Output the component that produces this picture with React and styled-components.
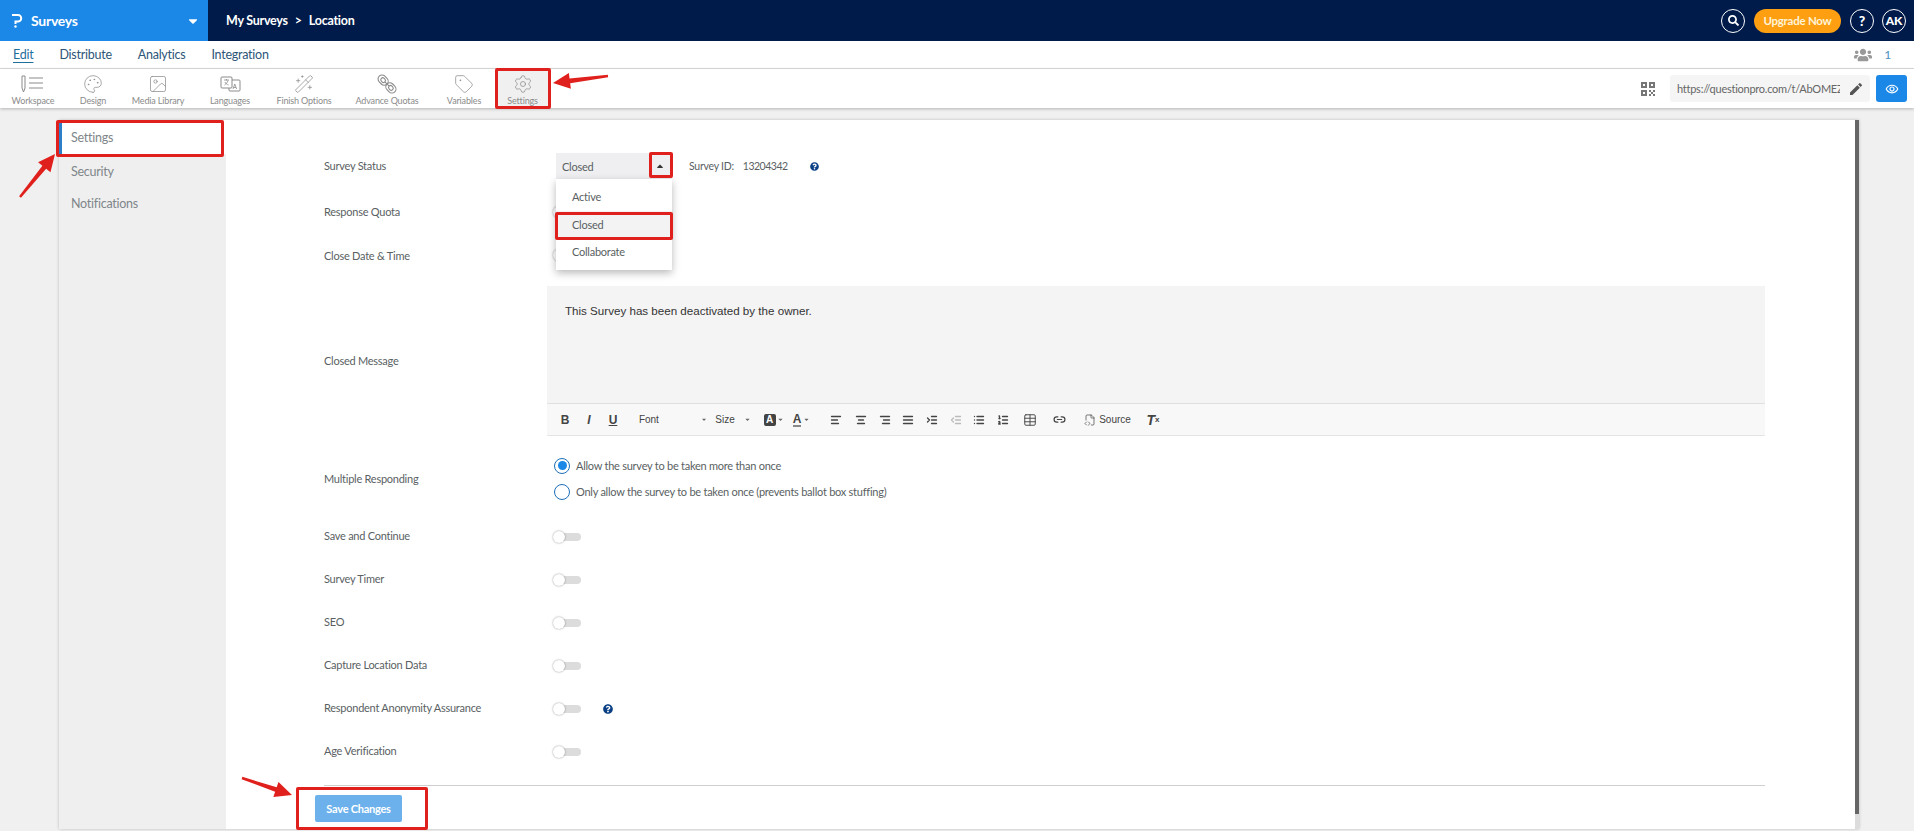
import React from 'react';
import styled, { createGlobalStyle } from 'styled-components';
import { FaSearch, FaUsers, FaQuestionCircle, FaCaretDown, FaCaretUp } from 'react-icons/fa';
import { MdEdit, MdOutlineRemoveRedEye } from 'react-icons/md';
import {
    Palette, Image, WandSparkles, Tag, Settings as Gear,
    AlignLeft, AlignCenter, AlignRight, AlignJustify, IndentIncrease, IndentDecrease,
    List, ListOrdered, Table, Link2, FileCode2,
} from 'lucide-react';

const Colors = {
    Navy: '#001a49',
    Blue: '#1b87e6',
    Page: '#f0f0f0',
    Side: '#efefef',
    Label: '#5a5f63',
    Icon: '#8b8b8b',
    Red: '#e0201c',
};

const SANS = '"Lato", "Liberation Sans", sans-serif';

const GlobalStyle = createGlobalStyle`
    html, body {
        margin: 0;
        padding: 0;
        height: 100%;
        overflow: hidden;
        background-color: ${Colors.Page};
        font-family: ${SANS};
        letter-spacing: -0.25px;
    }
`;

const Page = styled.div`
    position: relative;
    width: 1914px;
    height: 831px;
    overflow: hidden;
    display: flex;
    flex-direction: column;
`;

const TopBar = styled.header`
    height: 41px;
    display: flex;
    align-items: center;
    background-color: ${Colors.Navy};
    color: #fff;
`;

const Brand = styled.div`
    width: 208px;
    height: 100%;
    box-sizing: border-box;
    padding: 0 8px 0 12px;
    display: flex;
    align-items: center;
    background-color: ${Colors.Blue};
    font-size: 14px;
    font-weight: 700;
`;

const BrandName = styled.span`
    margin-left: 8px;
    flex: 1;
`;

const Crumbs = styled.div`
    margin-left: 18px;
    flex: 1;
    display: flex;
    align-items: center;
    gap: 7px;
    font-size: 12.5px;
    font-weight: 700;
`;

const TopActions = styled.div`
    display: flex;
    align-items: center;
    margin-right: 8px;
`;

const RoundButton = styled.div`
    width: 24px;
    height: 24px;
    box-sizing: border-box;
    margin-left: ${(p) => p.$ml || 9}px;
    border: 1.5px solid #fff;
    border-radius: 50%;
    display: flex;
    align-items: center;
    justify-content: center;
    font-size: ${(p) => p.$size || 13}px;
    font-weight: 900;
`;

const UpgradeButton = styled.div`
    width: 87px;
    height: 24px;
    margin-left: 9px;
    border-radius: 12px;
    background-color: #fd9f10;
    display: flex;
    align-items: center;
    justify-content: center;
    font-size: 11.5px;
    font-weight: 700;
    color: #fff3d8;
`;

const TabBar = styled.nav`
    height: 27px;
    padding: 0 23px 0 13px;
    display: flex;
    align-items: center;
    background-color: #fff;
    border-bottom: 1px solid #dcdcdc;
`;

const Tab = styled.span`
    margin-right: ${(p) => p.$mr}px;
    font-size: 12.5px;
    color: ${(p) => (p.$active ? '#1f6f9e' : '#2d5578')};
    text-decoration: ${(p) => (p.$active ? 'underline' : 'none')};
    text-underline-offset: 3px;
`;

const Online = styled.div`
    margin-left: auto;
    display: flex;
    align-items: center;
    gap: 12px;
    font-size: 12px;
    color: #4a90c2;
`;

const ToolBar = styled.div`
    height: 39px;
    padding-left: 3px;
    display: flex;
    align-items: stretch;
    background-color: #fff;
    box-shadow: 0 1px 3px rgba(0, 0, 0, 0.25);
    position: relative;
`;

const ToolItem = styled.div`
    width: ${(p) => p.$w}px;
    display: flex;
    flex-direction: column;
    align-items: center;
    padding-top: 4px;
    box-sizing: border-box;
    background-color: ${(p) => (p.$active ? '#f0f0f0' : 'transparent')};
    color: ${Colors.Icon};
    font-size: 9px;
`;

const ToolIcon = styled.div`
    height: 21px;
    display: flex;
    align-items: center;
    justify-content: center;
`;

const ToolLabel = styled.span`
    margin-top: 1px;
    white-space: nowrap;
    letter-spacing: -0.15px;
`;

const LinkArea = styled.div`
    margin-left: auto;
    margin-right: 7px;
    display: flex;
    align-items: center;
    gap: 6px;
`;

const LinkBox = styled.div`
    width: 200px;
    height: 27px;
    margin-left: 9px;
    box-sizing: border-box;
    padding: 0 6px 0 7px;
    display: flex;
    align-items: center;
    justify-content: space-between;
    background-color: #f5f5f5;
    border-radius: 3px;
    font-size: 11px;
    color: #666;
`;

const LinkText = styled.span`
    width: 163px;
    overflow: hidden;
    white-space: nowrap;
`;

const PreviewButton = styled.div`
    width: 31px;
    height: 27px;
    border-radius: 3px;
    background-color: ${Colors.Blue};
    display: flex;
    align-items: center;
    justify-content: center;
    color: #fff;
`;

const Body = styled.div`
    flex: 1;
    display: flex;
    margin: 12px 55px 2px 59px;
    min-height: 0;
    box-shadow: 0 0 3px rgba(0, 0, 0, 0.22);
`;

const SideMenu = styled.aside`
    width: 167px;
    background-color: ${Colors.Side};
`;

const SideItem = styled.div`
    height: ${(p) => p.$h}px;
    box-sizing: border-box;
    padding-left: 9px;
    display: flex;
    align-items: center;
    font-size: 12.5px;
    color: #80868a;
    background-color: ${(p) => (p.$active ? '#fff' : 'transparent')};
    border-left: 3px solid ${(p) => (p.$active ? '#2d7fc9' : 'transparent')};
`;

const Panel = styled.main`
    flex: 1;
    box-sizing: border-box;
    padding: 24px 90px 0 98px;
    background-color: #fff;
`;

const ScrollTrack = styled.div`
    width: 4px;
    background-color: #dcdcdc;
`;

const ScrollThumb = styled.div`
    height: 694px;
    background-color: #666;
`;

const Row = styled.div`
    height: ${(p) => p.$h}px;
    margin-top: ${(p) => p.$mt || 0}px;
    display: flex;
    align-items: center;
`;

const Label = styled.div`
    width: 223px;
    flex-shrink: 0;
    margin-top: ${(p) => p.$mt || 0}px;
    font-size: 11px;
    color: ${Colors.Label};
`;

const StatusSelect = styled.div`
    position: relative;
    width: 116px;
    height: 26px;
    margin-left: 9px;
    box-sizing: border-box;
    padding: 0 6px;
    display: flex;
    align-items: center;
    justify-content: space-between;
    background-color: #efeff1;
    font-size: 11px;
    color: ${Colors.Label};
`;

const CaretCell = styled.span`
    width: 12px;
    display: flex;
    justify-content: center;
    color: #333;
`;

const DropMenu = styled.ul`
    position: absolute;
    z-index: 2;
    top: 26px;
    left: 0;
    width: 116px;
    height: 91px;
    margin: 0;
    padding: 4px 0 0;
    box-sizing: border-box;
    list-style: none;
    background-color: #fff;
    box-shadow: 0 3px 8px rgba(0, 0, 0, 0.28);
`;

const DropItem = styled.li`
    height: 27.5px;
    padding-left: 16px;
    display: flex;
    align-items: center;
    background-color: ${(p) => (p.$active ? '#f3f3f3' : 'transparent')};
`;

const SurveyId = styled.div`
    margin-left: 17px;
    display: flex;
    align-items: center;
    gap: 9px;
    font-size: 10.5px;
    color: ${Colors.Label};
`;

const SurveyNumber = styled.span`
    letter-spacing: -0.5px;
`;

const HelpDot = styled.span`
    display: flex;
    margin-left: ${(p) => p.$ml}px;
    color: #0a3f85;
`;

const Editor = styled.div`
    margin-top: 12px;
    height: 150px;
    flex: 1;
    display: flex;
    flex-direction: column;
    background-color: #f4f4f4;
`;

const EditorText = styled.div`
    flex: 1;
    padding: 18px 18px 0;
    font-family: "Liberation Sans", Arial, sans-serif;
    font-size: 11.6px;
    letter-spacing: 0;
    color: #333;
`;

const EditorTools = styled.div`
    height: 33px;
    padding-left: 6px;
    display: flex;
    align-items: center;
    background-color: #f8f8f8;
    border-top: 1px solid #e0e0e0;
    border-bottom: 1px solid #e4e4e4;
    box-sizing: border-box;
    color: #444;
`;

const EditorTool = styled.span`
    width: ${(p) => p.$w}px;
    flex-shrink: 0;
    display: flex;
    align-items: center;
    justify-content: ${(p) => (p.$start ? 'flex-start' : 'center')};
    gap: ${(p) => p.$gap || 0}px;
    font-family: "Liberation Sans", Arial, sans-serif;
    font-size: ${(p) => p.$size || 10}px;
    font-weight: ${(p) => (p.$bold ? 700 : 400)};
    font-style: ${(p) => (p.$italic ? 'italic' : 'normal')};
    text-decoration: ${(p) => (p.$under ? 'underline' : 'none')};
    letter-spacing: 0;
    color: ${(p) => (p.$faded ? '#bbb' : '#444')};
`;

const ToolCaret = styled(FaCaretDown)`
    width: 7px;
    height: 7px;
    color: #666;
`;

const HighlightA = styled.span`
    width: 12px;
    height: 12px;
    border-radius: 2px;
    background-color: #444;
    color: #fff;
    font-weight: 700;
    font-size: 10px;
    display: flex;
    align-items: center;
    justify-content: center;
`;

const UnderlineA = styled.span`
    font-weight: 700;
    font-size: 12px;
    line-height: 12px;
    border-bottom: 2px solid #888;
`;

const Subscript = styled.sub`
    font-size: 8px;
    font-style: normal;
`;

const RadioGroup = styled.div`
    margin-left: 7px;
    margin-top: -1px;
    display: flex;
    flex-direction: column;
`;

const RadioLine = styled.label`
    height: 26px;
    display: flex;
    align-items: center;
    gap: 6px;
    font-size: 11px;
    color: ${Colors.Label};
`;

const RadioMark = styled.span`
    width: 14px;
    height: 14px;
    border: 1.5px solid #1d6fb8;
    border-radius: 50%;
    display: flex;
    align-items: center;
    justify-content: center;
    &::after {
        content: '';
        width: 9px;
        height: 9px;
        border-radius: 50%;
        background-color: ${(p) => (p.$on ? Colors.Blue : 'transparent')};
    }
`;

const Toggle = styled.span`
    position: relative;
    width: 28px;
    height: 14px;
    margin-left: 6px;
    display: flex;
    align-items: center;
    flex-shrink: 0;
    &::before {
        content: '';
        width: 21px;
        height: 8px;
        margin-left: 7px;
        border-radius: 4px;
        background-color: #dcdcdc;
    }
    &::after {
        content: '';
        position: absolute;
        left: 0;
        top: 1px;
        width: 12px;
        height: 12px;
        border-radius: 50%;
        background-color: #fff;
        box-shadow: 0 0 2px rgba(0, 0, 0, 0.45);
    }
`;

const Footer = styled.div`
    margin-top: 12px;
    padding-top: 9px;
    border-top: 1px solid #cfcfcf;
`;

const SaveButton = styled.button`
    width: 87px;
    height: 27px;
    margin-left: -9px;
    border: 0;
    border-radius: 2px;
    background-color: #6cb1ec;
    color: #fff;
    font-family: ${SANS};
    font-size: 11px;
    font-weight: 700;
    letter-spacing: -0.25px;
    display: block;
`;

// red markup drawn over the screenshot
const RedBox = styled.div`
    position: absolute;
    z-index: 5;
    left: ${(p) => p.$x}px;
    top: ${(p) => p.$y}px;
    width: ${(p) => p.$w}px;
    height: ${(p) => p.$h}px;
    box-sizing: border-box;
    border: 3px solid ${Colors.Red};
    border-radius: 2px;
`;

const ArrowLayer = styled.svg`
    position: absolute;
    z-index: 6;
    left: 0;
    top: 0;
    pointer-events: none;
`;

function arrowPoints([x1, y1], [x2, y2]) {
    const len = Math.hypot(x2 - x1, y2 - y1);
    const ux = (x2 - x1) / len;
    const uy = (y2 - y1) / len;
    const nx = -uy;
    const ny = ux;
    const bx = x2 - ux * 17;
    const by = y2 - uy * 17;
    const pts = [
        [x1 + nx * 1.2, y1 + ny * 1.2],
        [bx + nx * 2.4, by + ny * 2.4],
        [bx + nx * 8, by + ny * 8],
        [x2, y2],
        [bx - nx * 8, by - ny * 8],
        [bx - nx * 2.4, by - ny * 2.4],
        [x1 - nx * 1.2, y1 - ny * 1.2],
    ];
    return pts.map((p) => p.join(',')).join(' ');
}

function WorkspaceIcon() {
    return (
        <svg width="24" height="20" viewBox="0 0 24 20" fill="none" stroke={Colors.Icon} strokeWidth="1">
            <path d="M1 2h3v12l-1.500 4L1 14z" />
            <path d="M8 4h14M8 9h14M8 14h14" />
        </svg>
    );
}

function LanguagesIcon() {
    return (
        <svg width="21" height="18" viewBox="0 0 21 18" fill="none" stroke={Colors.Icon} strokeWidth="1">
            <rect x="1" y="2" width="11" height="11" rx="1" />
            <path d="M12 5h7a1 1 0 0 1 1 1v9a1 1 0 0 1-1 1h-9a1 1 0 0 1-1-1v-2" />
            <path d="M4 5h5M6.500 4v1.500M8 5.500c-.5 2-2 3.500-3.500 4.500M5 7c.5 1.500 2 2.500 3.500 3" strokeWidth=".8" />
            <path d="M13 14l1.800-5 1.800 5M13.600 12.500h2.400" strokeWidth=".8" />
        </svg>
    );
}

function ChainsIcon() {
    return (
        <svg width="20" height="20" viewBox="0 0 20 20" fill="none" stroke={Colors.Icon} strokeWidth="1.100">
            <g transform="rotate(-45 10 10)">
                <rect x="6" y="-1" width="8" height="11" rx="4" />
                <rect x="6" y="10" width="8" height="11" rx="4" />
                <rect x="8" y="2" width="4" height="5" rx="2" />
                <rect x="8" y="13" width="4" height="5" rx="2" />
                <path d="M10 7v6" />
            </g>
        </svg>
    );
}

function QrIcon() {
    return (
        <svg width="14" height="14" viewBox="0 0 14 14" fill="#777">
            <path d="M0 0h6v6H0zM2 2v2h2V2zM8 0h6v6H8zM10 2v2h2V2zM0 8h6v6H0zM2 10v2h2v-2z" fillRule="evenodd" />
            <path d="M8 8h2v2H8zM12 8h2v2h-2zM10 10h2v2h-2zM8 12h2v2H8zM12 12h2v2h-2z" />
        </svg>
    );
}

function LogoIcon() {
    return (
        <svg width="11" height="15" viewBox="0 0 11 15" fill="none" stroke="#fff" strokeWidth="2">
            <path d="M0 2h6a3 3 0 0 1 0 6.500H3.500v2.500" />
            <circle cx="3.500" cy="13.500" r="1.200" fill="#fff" stroke="none" />
        </svg>
    );
}

const lineIcon = { size: 20, strokeWidth: 0.9, color: Colors.Icon };
const editIcon = { size: 12, strokeWidth: 2.6 };

const TOOLS = [
    { label: 'Workspace', w: 60, icon: <WorkspaceIcon /> },
    { label: 'Design', w: 60, icon: <Palette {...lineIcon} /> },
    { label: 'Media Library', w: 70, icon: <Image {...lineIcon} /> },
    { label: 'Languages', w: 74, icon: <LanguagesIcon /> },
    { label: 'Finish Options', w: 74, icon: <WandSparkles {...lineIcon} /> },
    { label: 'Advance Quotas', w: 92, icon: <ChainsIcon /> },
    { label: 'Variables', w: 62, icon: <Tag {...lineIcon} /> },
    { label: 'Settings', w: 55, icon: <Gear {...lineIcon} />, active: true },
];

const TOGGLE_ROWS = ['Save and Continue', 'Survey Timer', 'SEO', 'Capture Location Data', 'Respondent Anonymity Assurance', 'Age Verification'];

const ARROWS = [
    [[608, 76], [553, 83]],
    [[20, 197], [55, 154]],
    [[242, 778], [292, 795]],
];

const RED_BOXES = [
    { x: 495, y: 68, w: 56, h: 41 },
    { x: 56, y: 120, w: 168, h: 37 },
    { x: 649, y: 152, w: 24, h: 26 },
    { x: 555, y: 212, w: 118, h: 28 },
    { x: 296, y: 787, w: 132, h: 43 },
];

function App() {
    return (
        <Page>
            <GlobalStyle />
            <TopBar>
                <Brand>
                    <LogoIcon />
                    <BrandName>Surveys</BrandName>
                    <FaCaretDown size={14} />
                </Brand>
                <Crumbs>
                    <span>My Surveys</span>
                    <span>&gt;</span>
                    <span>Location</span>
                </Crumbs>
                <TopActions>
                    <RoundButton><FaSearch size={11} /></RoundButton>
                    <UpgradeButton>Upgrade Now</UpgradeButton>
                    <RoundButton $size={14}>?</RoundButton>
                    <RoundButton $size={12} $ml={8}>AK</RoundButton>
                </TopActions>
            </TopBar>

            <TabBar>
                <Tab $active $mr={26}>Edit</Tab>
                <Tab $mr={26}>Distribute</Tab>
                <Tab $mr={26}>Analytics</Tab>
                <Tab $mr={0}>Integration</Tab>
                <Online>
                    <FaUsers size={18} color="#999" />
                    <span>1</span>
                </Online>
            </TabBar>

            <ToolBar>
                {TOOLS.map((tool) => (
                    <ToolItem key={tool.label} $w={tool.w} $active={tool.active}>
                        <ToolIcon>{tool.icon}</ToolIcon>
                        <ToolLabel>{tool.label}</ToolLabel>
                    </ToolItem>
                ))}
                <LinkArea>
                    <QrIcon />
                    <LinkBox>
                        <LinkText>https://questionpro.com/t/AbOMEZ7</LinkText>
                        <MdEdit size={16} color="#555" />
                    </LinkBox>
                    <PreviewButton><MdOutlineRemoveRedEye size={14} /></PreviewButton>
                </LinkArea>
            </ToolBar>

            <Body>
                <SideMenu>
                    <SideItem $active $h={34}>Settings</SideItem>
                    <SideItem $h={34}>Security</SideItem>
                    <SideItem $h={30}>Notifications</SideItem>
                </SideMenu>
                <Panel>
                    <Row $h={44}>
                        <Label $mt={-2}>Survey Status</Label>
                        <StatusSelect>
                            Closed
                            <CaretCell><FaCaretUp size={10} /></CaretCell>
                            <DropMenu>
                                <DropItem>Active</DropItem>
                                <DropItem $active>Closed</DropItem>
                                <DropItem>Collaborate</DropItem>
                            </DropMenu>
                        </StatusSelect>
                        <SurveyId>
                            <span>Survey ID:</span>
                            <SurveyNumber>13204342</SurveyNumber>
                            <HelpDot $ml={13}><FaQuestionCircle size={9} /></HelpDot>
                        </SurveyId>
                    </Row>
                    <Row $h={48}>
                        <Label $mt={-2}>Response Quota</Label>
                        <Toggle />
                    </Row>
                    <Row $h={38}>
                        <Label>Close Date &amp; Time</Label>
                        <Toggle />
                    </Row>
                    <Row $h={162}>
                        <Label $mt={10}>Closed Message</Label>
                        <Editor>
                            <EditorText>This Survey has been deactivated by the owner.</EditorText>
                            <EditorTools>
                                <EditorTool $w={24} $bold $size={12}>B</EditorTool>
                                <EditorTool $w={24} $bold $italic $size={12}>I</EditorTool>
                                <EditorTool $w={24} $bold $under $size={12}>U</EditorTool>
                                <EditorTool $w={81} $start $gap={43}>
                                    <span>&nbsp;&nbsp;&nbsp;&nbsp;&nbsp;Font</span>
                                    <ToolCaret />
                                </EditorTool>
                                <EditorTool $w={54} $gap={9}>
                                    <span>Size</span>
                                    <ToolCaret />
                                </EditorTool>
                                <EditorTool $w={27} $gap={1}><HighlightA>A</HighlightA><ToolCaret /></EditorTool>
                                <EditorTool $w={29} $gap={2}><UnderlineA>A</UnderlineA><ToolCaret /></EditorTool>
                                <EditorTool $w={8} />
                                <EditorTool $w={24}><AlignLeft {...editIcon} /></EditorTool>
                                <EditorTool $w={25}><AlignCenter {...editIcon} /></EditorTool>
                                <EditorTool $w={24}><AlignRight {...editIcon} /></EditorTool>
                                <EditorTool $w={22}><AlignJustify {...editIcon} /></EditorTool>
                                <EditorTool $w={25}><IndentIncrease {...editIcon} /></EditorTool>
                                <EditorTool $w={23} $faded><IndentDecrease {...editIcon} /></EditorTool>
                                <EditorTool $w={24}><List {...editIcon} /></EditorTool>
                                <EditorTool $w={23}><ListOrdered {...editIcon} /></EditorTool>
                                <EditorTool $w={4} />
                                <EditorTool $w={24}><Table size={14} strokeWidth={1.6} /></EditorTool>
                                <EditorTool $w={5} />
                                <EditorTool $w={24}><Link2 size={13} strokeWidth={2.2} /></EditorTool>
                                <EditorTool $w={10} />
                                <EditorTool $w={53} $gap={3}><FileCode2 size={12} strokeWidth={1.4} /><span>Source</span></EditorTool>
                                <EditorTool $w={7} />
                                <EditorTool $w={24} $bold $italic $size={14}>T<Subscript>x</Subscript></EditorTool>
                            </EditorTools>
                        </Editor>
                    </Row>
                    <Row $h={52} $mt={17}>
                        <Label $mt={-2}>Multiple Responding</Label>
                        <RadioGroup>
                            <RadioLine><RadioMark $on />Allow the survey to be taken more than once</RadioLine>
                            <RadioLine><RadioMark />Only allow the survey to be taken once (prevents ballot box stuffing)</RadioLine>
                        </RadioGroup>
                    </Row>
                    <Row $h={10} />
                    {TOGGLE_ROWS.map((name) => (
                        <Row $h={43} key={name}>
                            <Label $mt={-2}>{name}</Label>
                            <Toggle />
                            {name.startsWith('Respondent') && <HelpDot $ml={22}><FaQuestionCircle size={10} /></HelpDot>}
                        </Row>
                    ))}
                    <Footer>
                        <SaveButton>Save Changes</SaveButton>
                    </Footer>
                </Panel>
                <ScrollTrack><ScrollThumb /></ScrollTrack>
            </Body>

            {RED_BOXES.map((box) => (
                <RedBox key={`${box.x}-${box.y}`} $x={box.x} $y={box.y} $w={box.w} $h={box.h} />
            ))}
            <ArrowLayer width="1914" height="831">
                {ARROWS.map(([from, to]) => (
                    <polygon key={from.join()} points={arrowPoints(from, to)} fill={Colors.Red} />
                ))}
            </ArrowLayer>
        </Page>
    );
}

export default App;
